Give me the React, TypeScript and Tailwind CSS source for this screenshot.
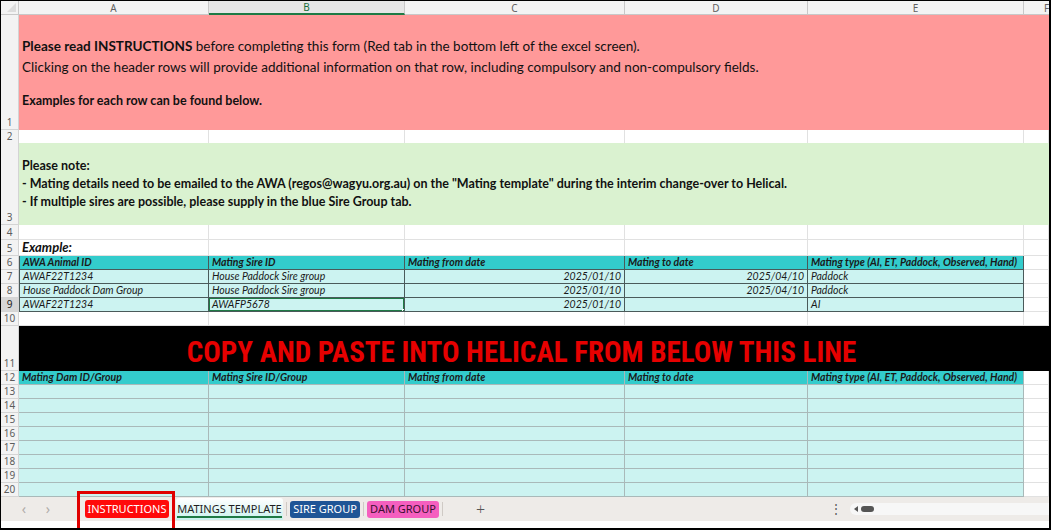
import React from 'react';

const COLS = 'grid grid-cols-[18px_190px_196px_220px_183px_216px_1fr]';
const body = { fontFamily: 'Lato, "Noto Sans", sans-serif' };
const ui = { fontFamily: '"Noto Sans", "Open Sans", sans-serif' };

function RowNum({ n, active }: { n: number; active?: boolean }) {
  return (
    <div
      className={`flex items-end justify-center border-r border-b border-[#d4d4d4] text-[10px] leading-[13px] ${
        active ? 'bg-[#d6d6d6] text-[#1d1d1d]' : 'bg-[#f3f3f3] text-[#5c5c5c]'
      }`}
      style={ui}
    >
      {n}
    </div>
  );
}

function Blank() {
  return <div className="border-r border-b border-[#e1e1e1] bg-white" />;
}

type Cell = { text?: string; right?: boolean };

function TableRow({ n, h, cells, header, light, active }: {
  n: number; h: string; cells: Cell[]; header?: boolean; light?: boolean; active?: boolean;
}) {
  const border = light ? 'border-[#a9b9b9]' : 'border-[#4a5a5a]';
  return (
    <div className={`${COLS} ${h}`}>
      <RowNum n={n} active={active} />
      {cells.map((c, i) => (
        <div
          key={i}
          className={`relative flex items-end overflow-hidden whitespace-nowrap px-[3px] text-[10.5px] leading-[13px] italic text-[#1a1a1a] border-r border-b ${border} ${
            i === 0 && !light ? 'border-l' : ''
          } ${header ? 'bg-[#33cccc] font-bold' : 'bg-[#ccf3f1]'} ${c.right ? 'justify-end' : ''}`}
          style={body}
        >
          {c.text}
          {active && i === 1 && (
            <>
              <div className="absolute -inset-px border-2 border-[#1e7a45]" />
              <div className="absolute -right-[3px] -bottom-[3px] h-[5px] w-[5px] bg-[#1e7a45] border border-white" />
            </>
          )}
        </div>
      ))}
      <Blank />
    </div>
  );
}

export default function App() {
  const headerLabels = ['A', 'B', 'C', 'D', 'E'];
  const empty: Cell[] = [{}, {}, {}, {}, {}];
  return (
    <div className="relative flex h-[530px] w-[1051px] flex-col overflow-hidden border-t border-l border-r-2 border-b-2 border-black bg-white">
      {/* column letters */}
      <div className={`${COLS} h-[14px] shrink-0`}>
        <div className="relative border-r border-b border-[#c8c8c8] bg-[#f3f3f3]">
          <div className="absolute right-[2px] bottom-[2px] h-0 w-0 border-l-[9px] border-t-[9px] border-l-transparent border-t-transparent border-r-[9px] border-r-[#dcdcdc]" />
        </div>
        {headerLabels.map(l => (
          <div
            key={l}
            className={`flex items-center justify-center text-[10px] leading-none border-r ${
              l === 'B'
                ? 'bg-[#e6e6e6] text-[#17703c] border-b-2 border-b-[#1e7a45] border-r-[#c8c8c8]'
                : 'bg-[#f3f3f3] text-[#616161] border-b border-[#c8c8c8]'
            }`}
            style={ui}
          >
            {l}
          </div>
        ))}
        <div className="flex items-center pl-[20px] text-[10px] leading-none text-[#616161] bg-[#f3f3f3] border-b border-[#c8c8c8]" style={ui}>F</div>
      </div>

      <div className="flex-1 overflow-hidden">
        {/* row 1 */}
        <div className={`${COLS} h-[115px]`}>
          <RowNum n={1} />
          <div className="col-span-6 bg-[#ff9999] pl-[3px] pt-[21px] text-[#111]" style={body}>
            <p className="text-[13.5px] leading-[21px]">
              <b>Please read INSTRUCTIONS</b> before completing this form (Red tab in the bottom left of the excel screen).
            </p>
            <p className="text-[13.5px] leading-[21px]">
              Clicking on the header rows will provide additional information on that row, including compulsory and non-compulsory fields.
            </p>
            <p className="mt-[12px] text-[12.5px] leading-[21px] font-bold">Examples for each row can be found below.</p>
          </div>
        </div>

        {/* row 2 */}
        <div className={`${COLS} h-[13px]`}>
          <RowNum n={2} />
          <Blank /><Blank /><Blank /><Blank /><Blank /><Blank />
        </div>

        {/* row 3 */}
        <div className={`${COLS} h-[82px]`}>
          <RowNum n={3} />
          <div className="col-span-6 bg-[#daf2d0] pl-[3px] pt-[14px] text-[12.5px] leading-[18px] font-bold text-[#111]" style={body}>
            <p>Please note:</p>
            <p>- Mating details need to be emailed to the AWA (regos@wagyu.org.au) on the "Mating template" during the interim change-over to Helical.</p>
            <p>- If multiple sires are possible, please supply in the blue Sire Group tab.</p>
          </div>
        </div>

        {/* row 4 */}
        <div className={`${COLS} h-[15px]`}>
          <RowNum n={4} />
          <Blank /><Blank /><Blank /><Blank /><Blank /><Blank />
        </div>

        {/* row 5 */}
        <div className={`${COLS} h-[16px]`}>
          <RowNum n={5} />
          <div className="flex items-end overflow-visible whitespace-nowrap border-r border-b border-[#e1e1e1] px-[3px] text-[13px] leading-[15px] font-bold italic text-[#111]" style={body}>
            Example:
          </div>
          <Blank /><Blank /><Blank /><Blank /><Blank />
        </div>

        <TableRow
          n={6}
          h="h-[14px]"
          header
          cells={[
            { text: 'AWA Animal ID' },
            { text: 'Mating Sire ID' },
            { text: 'Mating from date' },
            { text: 'Mating to date' },
            { text: 'Mating type (AI, ET, Paddock, Observed, Hand)' },
          ]}
        />
        <TableRow
          n={7}
          h="h-[14px]"
          cells={[
            { text: 'AWAF22T1234' },
            { text: 'House Paddock Sire group' },
            { text: '2025/01/10', right: true },
            { text: '2025/04/10', right: true },
            { text: 'Paddock' },
          ]}
        />
        <TableRow
          n={8}
          h="h-[14px]"
          cells={[
            { text: 'House Paddock Dam Group' },
            { text: 'House Paddock Sire group' },
            { text: '2025/01/10', right: true },
            { text: '2025/04/10', right: true },
            { text: 'Paddock' },
          ]}
        />
        <TableRow
          n={9}
          h="h-[14px]"
          active
          cells={[
            { text: 'AWAF22T1234' },
            { text: 'AWAFP5678' },
            { text: '2025/01/10', right: true },
            {},
            { text: 'AI' },
          ]}
        />

        {/* row 10 */}
        <div className={`${COLS} h-[14px]`}>
          <RowNum n={10} />
          <Blank /><Blank /><Blank /><Blank /><Blank /><Blank />
        </div>

        {/* row 11 banner */}
        <div className={`${COLS} h-[45px]`}>
          <RowNum n={11} />
          <div className="col-span-6 flex items-end bg-black pb-[3px]">
            <div
              className="w-[1005px] text-center text-[29px] leading-[32px] font-bold text-[#e60000] whitespace-nowrap"
              style={{ fontFamily: '"Roboto Condensed", "Liberation Sans Narrow", Roboto, sans-serif' }}
            >
              COPY AND PASTE INTO HELICAL FROM BELOW THIS LINE
            </div>
          </div>
        </div>

        <TableRow
          n={12}
          h="h-[14px]"
          header
          light
          cells={[
            { text: 'Mating Dam ID/Group' },
            { text: 'Mating Sire ID/Group' },
            { text: 'Mating from date' },
            { text: 'Mating to date' },
            { text: 'Mating type (AI, ET, Paddock, Observed, Hand)' },
          ]}
        />
        {[13, 14, 15, 16, 17, 18, 19, 20].map(n => (
          <TableRow key={n} n={n} h="h-[14px]" light cells={empty} />
        ))}
      </div>

      {/* sheet tabs */}
      <div className="flex h-[24px] shrink-0 items-center bg-[#eeebe8] text-[11px]" style={ui}>
        <div className="flex w-[76px] items-center pl-[11px] text-[14px] leading-none text-[#b0aca8]">
          <span className="w-[24px] text-center">‹</span>
          <span className="w-[24px] text-center">›</span>
        </div>
        <div className="ml-[8px] flex h-[18px] w-[84px] items-center justify-center rounded-[3px] bg-[#ff0a0a] text-white">
          INSTRUCTIONS
        </div>
        <div className="mx-[3px] h-[14px] w-px bg-[#cfcac5]" />
        <div className="flex h-[22px] w-[107px] flex-col items-center justify-end rounded-t-[3px] bg-gradient-to-b from-white to-[#c9f1ee] pb-[2px] text-[#1e1e1e]">
          <span className="border-b-2 border-[#1e7a45] leading-[15px]">MATINGS TEMPLATE</span>
        </div>
        <div className="mx-[3px] h-[14px] w-px bg-[#cfcac5]" />
        <div className="flex h-[17px] w-[70px] items-center justify-center rounded-[3px] bg-[#1f5596] text-white">
          SIRE GROUP
        </div>
        <div className="mx-[3px] h-[14px] w-px bg-[#cfcac5]" />
        <div className="flex h-[17px] w-[72px] items-center justify-center rounded-[3px] bg-[#f55fbf] text-[#3a1030]">
          DAM GROUP
        </div>
        <div className="mx-[3px] h-[14px] w-px bg-[#cfcac5]" />
        <div className="ml-[30px] text-[16px] font-light text-[#555]">+</div>
        <div className="ml-auto flex items-center">
          <span className="mr-[8px] text-[12px] leading-none text-[#555]">⋮</span>
          <div className="flex h-[12px] w-[199px] items-center rounded-l-[6px] bg-[#f7f7f7] pl-[4px]">
            <div className="h-0 w-0 border-y-[3px] border-r-[4px] border-y-transparent border-r-[#555]" />
            <div className="ml-[3px] h-[6px] w-[13px] rounded-full bg-[#555]" />
          </div>
        </div>
      </div>
      <div className="h-[7px] shrink-0 bg-white" />

      {/* red highlight around instructions tab */}
      <div className="pointer-events-none absolute left-[76px] top-[490px] h-[40px] w-[98px] border-[3px] border-[#e00000]" />
    </div>
  );
}
